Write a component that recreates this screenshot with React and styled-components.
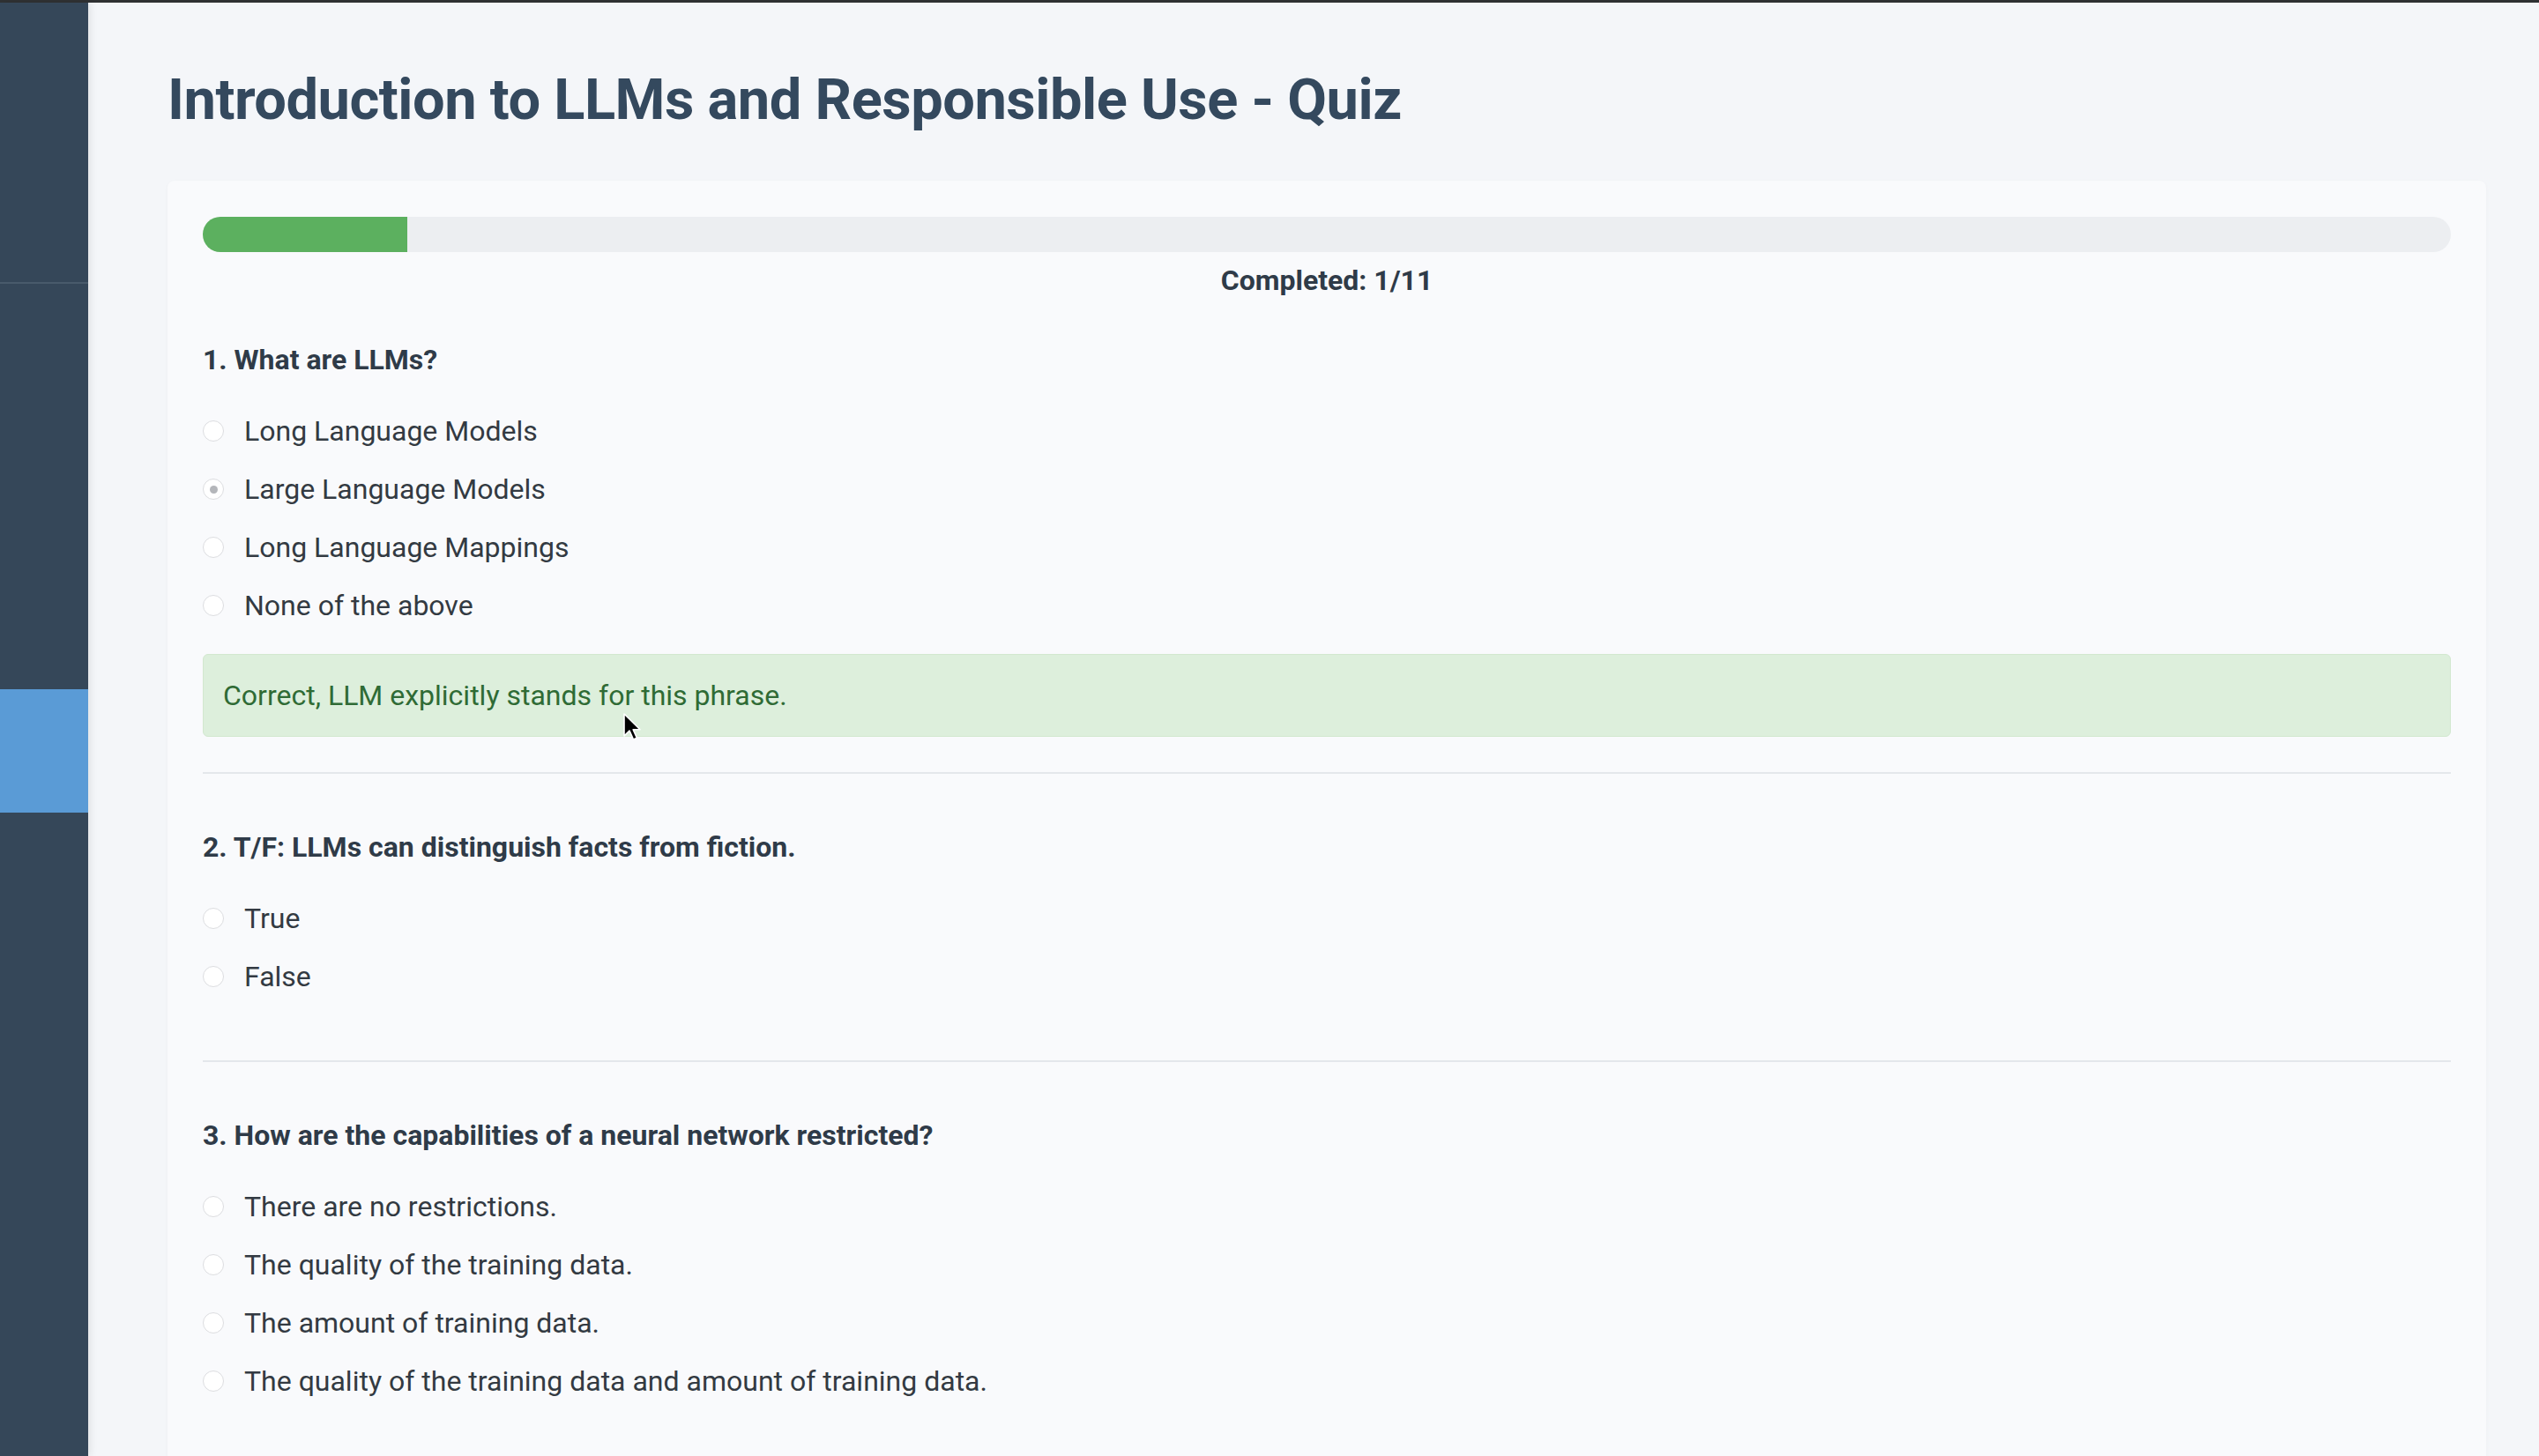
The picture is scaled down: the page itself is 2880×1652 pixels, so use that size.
import React from "react";
import styled, { createGlobalStyle } from "styled-components";

const GlobalStyle = createGlobalStyle`
  html, body {
    margin: 0;
    padding: 0;
    background: #f4f6f9;
    font-family: Roboto, "Noto Sans", sans-serif;
  }
  * { box-sizing: border-box; }
`;

const Shell = styled.div`
  display: flex;
  flex-direction: column;
  width: 2880px;
  height: 1652px;
  overflow: hidden;
  position: relative;
`;

const TopEdge = styled.div`
  height: 3px;
  background: #2f3133;
  flex-shrink: 0;
`;

const Body = styled.div`
  display: flex;
  flex: 1;
  min-height: 0;
`;

const Sidebar = styled.aside`
  width: 100px;
  flex-shrink: 0;
  background: #354759;
  display: flex;
  flex-direction: column;
  box-shadow: 3px 0 8px rgba(0, 0, 0, 0.08);
  z-index: 1;
`;

const SideBlock = styled.div`
  height: ${(p) => p.h}px;
  background: ${(p) => (p.active ? "#5a9bd6" : "transparent")};
  border-bottom: ${(p) => (p.divider ? "2px solid #485a6b" : "none")};
  flex-shrink: 0;
`;

const Main = styled.main`
  flex: 1;
  padding: 0 60px 0 90px;
  background: #f4f6f9;
`;

const Title = styled.h1`
  margin: 0;
  padding-top: 72px;
  font-size: 65px;
  line-height: 76px;
  font-weight: 700;
  color: #34495e;
  letter-spacing: -0.5px;
`;

const Card = styled.section`
  margin-top: 54px;
  background: #f9fafc;
  border-radius: 8px;
  padding: 41px 40px 40px;
  box-shadow: 0 1px 4px rgba(0, 0, 0, 0.03);
`;

const Track = styled.div`
  height: 40px;
  border-radius: 20px;
  background: #eceef1;
  overflow: hidden;
`;

const Fill = styled.div`
  height: 100%;
  background: #5cb05f;
`;

const ProgressLabel = styled.div`
  margin-top: 13px;
  margin-bottom: 2px;
  text-align: center;
  font-size: 32px;
  line-height: 38px;
  font-weight: 700;
  color: #2f3b48;
`;

const Question = styled.div`
  padding: 64px 0 40px;
  border-bottom: 2px solid #e4e7eb;

  &:first-child {
    padding-top: 50px;
  }
`;

const Heading = styled.h3`
  margin: 0 0 43px;
  font-size: 32px;
  line-height: 38px;
  font-weight: 700;
  color: #2f3b48;
`;

const Options = styled.div`
  display: flex;
  flex-direction: column;
  gap: 28px;
  margin-bottom: 36px;
`;

const Option = styled.label`
  display: flex;
  align-items: center;
  gap: 23px;
  height: 38px;
  font-size: 32px;
  color: #333a42;
`;

const Radio = styled.span`
  width: 24px;
  height: 24px;
  border-radius: 50%;
  border: 1.5px solid #dcdde0;
  background: #fff;
  display: flex;
  align-items: center;
  justify-content: center;
  flex-shrink: 0;

  &::after {
    content: "";
    width: 9px;
    height: 9px;
    border-radius: 50%;
    background: ${(p) => (p.checked ? "#b4b6ba" : "transparent")};
  }
`;

const Feedback = styled.div`
  height: 94px;
  display: flex;
  align-items: center;
  padding: 0 22px;
  background: #ddefdc;
  border: 1px solid #d2e8cf;
  border-radius: 6px;
  font-size: 32px;
  color: #2f6b35;
`;

const Cursor = styled.svg`
  position: absolute;
  left: 706px;
  top: 808px;
  width: 22px;
  height: 34px;
  z-index: 5;
`;

const questions = [
  {
    q: "1. What are LLMs?",
    options: [
      "Long Language Models",
      "Large Language Models",
      "Long Language Mappings",
      "None of the above",
    ],
    checked: 1,
    feedback: "Correct, LLM explicitly stands for this phrase.",
  },
  {
    q: "2. T/F: LLMs can distinguish facts from fiction.",
    options: ["True", "False"],
  },
  {
    q: "3. How are the capabilities of a neural network restricted?",
    options: [
      "There are no restrictions.",
      "The quality of the training data.",
      "The amount of training data.",
      "The quality of the training data and amount of training data.",
    ],
  },
];

export default function App() {
  const done = 1;
  const total = 11;
  return (
    <>
      <GlobalStyle />
      <Shell>
        <TopEdge />
        <Body>
          <Sidebar>
            <SideBlock h={319} divider />
            <SideBlock h={460} />
            <SideBlock h={140} active />
          </Sidebar>
          <Main>
            <Title>Introduction to LLMs and Responsible Use - Quiz</Title>
            <Card>
              <Track>
                <Fill style={{ width: `${(done / total) * 100}%` }} />
              </Track>
              <ProgressLabel>
                Completed: {done}/{total}
              </ProgressLabel>
              <div>
                {questions.map((item) => (
                  <Question key={item.q}>
                    <Heading>{item.q}</Heading>
                    <Options>
                      {item.options.map((o, i) => (
                        <Option key={o}>
                          <Radio checked={item.checked === i} />
                          {o}
                        </Option>
                      ))}
                    </Options>
                    {item.feedback && <Feedback>{item.feedback}</Feedback>}
                  </Question>
                ))}
              </div>
            </Card>
          </Main>
        </Body>
        <Cursor viewBox="0 0 22 34">
          <path
            d="M2 2 L2 27 L8 21 L12.5 31 L16.5 29.3 L12.2 19.8 L20 19.8 Z"
            fill="#000"
            stroke="#fff"
            strokeWidth="1.6"
            strokeLinejoin="round"
          />
        </Cursor>
      </Shell>
    </>
  );
}
